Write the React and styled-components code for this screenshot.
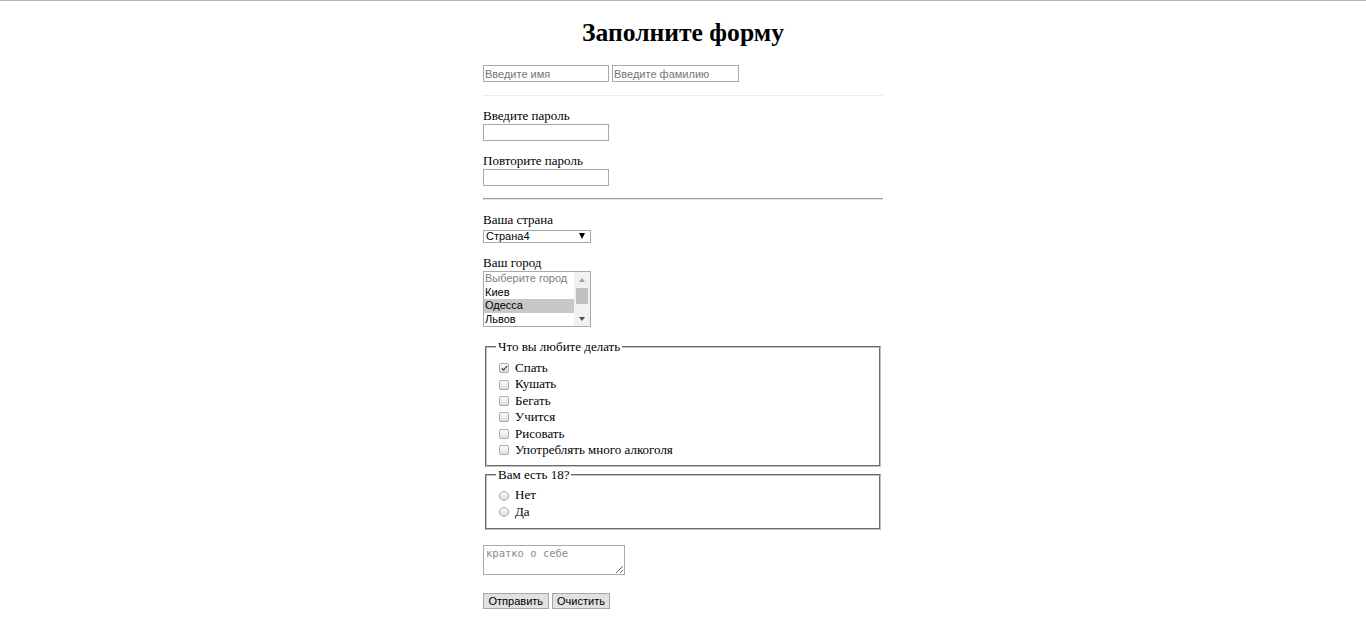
import React from "react";
import styled, { createGlobalStyle } from "styled-components";

const GlobalStyle = createGlobalStyle`
  body {
    margin: 0;
    border-top: 1px solid #b4b4b4;
    font-family: "Liberation Serif", "Times New Roman", serif;
    font-size: 13px;
    color: #000;
    background: #fff;
  }
`;

const Form = styled.form`
  width: 400px;
  margin: 0 auto;
  display: flex;
  flex-direction: column;
  align-items: flex-start;
`;

const Title = styled.h1`
  align-self: stretch;
  margin: 17px 0 0;
  font-size: 25.6px;
  line-height: 30px;
  font-weight: bold;
  text-align: center;
`;

const NameRow = styled.div`
  display: flex;
  gap: 3px;
  margin-top: 17px;
`;

const TextInput = styled.input`
  box-sizing: border-box;
  width: ${(p) => p.$width || 126}px;
  height: 17px;
  margin: 0;
  padding: 0 1px;
  border: 1px solid #a9a9a9;
  border-radius: 0;
  font-family: "Liberation Sans", Arial, sans-serif;
  font-size: 11px;
  outline: none;
  &::placeholder {
    color: #757575;
  }
`;

const Divider = styled.hr`
  align-self: stretch;
  height: 0;
  margin: ${(p) => p.$top}px 0 0;
  border: none;
  border-top: 1px solid ${(p) => (p.$light ? "#ececec" : "#9c9c9c")};
  border-bottom: 1px solid ${(p) => (p.$light ? "transparent" : "#e2e2e2")};
`;

const FieldLabel = styled.label`
  display: block;
  margin-top: ${(p) => p.$top || 12}px;
  line-height: 16px;
`;

const SelectWrap = styled.div`
  position: relative;
  width: 108px;
  height: 13px;
  margin-top: 2px;
`;

const Select = styled.select`
  appearance: none;
  box-sizing: border-box;
  display: block;
  width: 100%;
  height: 100%;
  margin: 0;
  padding: 0 0 0 2px;
  border: 1px solid #a9a9a9;
  border-radius: 0;
  background: #fff;
  font-family: "Liberation Sans", Arial, sans-serif;
  font-size: 11px;
  line-height: 11px;
  color: #000;
  outline: none;
`;

const SelectArrow = styled.span`
  position: absolute;
  right: 6px;
  top: 3px;
  width: 0;
  height: 0;
  border-left: 3.5px solid transparent;
  border-right: 3.5px solid transparent;
  border-top: 6px solid #000;
  pointer-events: none;
`;

const ListBox = styled.div`
  box-sizing: border-box;
  display: flex;
  width: 108px;
  height: 56px;
  border: 1px solid #a9a9a9;
  background: #fff;
  font-family: "Liberation Sans", Arial, sans-serif;
  font-size: 11px;
`;

const OptionList = styled.div`
  flex: 1;
`;

const ListOption = styled.div`
  height: 13.5px;
  line-height: 13.5px;
  padding-left: 1px;
  white-space: nowrap;
  color: ${(p) => (p.$disabled ? "#808080" : "#000")};
  background: ${(p) => (p.$selected ? "#c8c8c8" : "transparent")};
`;

const ScrollBar = styled.div`
  width: 16px;
  background: #f1f1f1;
  display: flex;
  flex-direction: column;
  align-items: center;
`;

const ScrollButton = styled.div`
  height: 15px;
  display: flex;
  align-items: center;
  justify-content: center;
  &::before {
    content: "";
    width: 0;
    height: 0;
    border-left: 3.5px solid transparent;
    border-right: 3.5px solid transparent;
    ${(p) =>
      p.$down
        ? "border-top: 4px solid #505050;"
        : "border-bottom: 4px solid #a3a3a3;"}
  }
`;

const ScrollThumb = styled.div`
  width: 12px;
  height: 16px;
  margin-top: 1px;
  background: #c1c1c1;
`;

const ScrollTrack = styled.div`
  flex: 1;
`;

const Group = styled.fieldset`
  align-self: stretch;
  margin: ${(p) => p.$top || 0}px 2px 0;
  padding: ${(p) => p.$pad}px 9px ${(p) => p.$bottom}px;
  border: 2px groove #c0c0c0;
  min-inline-size: auto;
`;

const Legend = styled.legend`
  padding: 0 2px;
  line-height: 16px;
`;

const ChoiceRow = styled.label`
  display: flex;
  align-items: center;
  height: 16.4px;
  line-height: 16.4px;
  white-space: nowrap;
`;

const Mark = styled.span`
  box-sizing: border-box;
  display: flex;
  align-items: center;
  justify-content: center;
  width: 10px;
  height: 10px;
  margin: 0 6px 0 3px;
  border: 1px solid #ababab;
  border-radius: ${(p) => (p.$round ? "50%" : "2px")};
  background: linear-gradient(#fbfbfb, #dedede);
`;

const About = styled.textarea`
  box-sizing: border-box;
  width: 142px;
  height: 30px;
  margin: 15px 0 0;
  padding: 1px 2px;
  border: 1px solid #a9a9a9;
  border-radius: 0;
  font-family: "DejaVu Sans Mono", "Liberation Mono", monospace;
  font-size: 10.5px;
  outline: none;
  &::placeholder {
    color: #8c8c8c;
  }
`;

const ButtonRow = styled.div`
  display: flex;
  gap: 3px;
  margin-top: 18px;
`;

const Button = styled.button`
  box-sizing: border-box;
  height: 16px;
  margin: 0;
  padding: 0 4.5px;
  border: 1px solid #a6a6a6;
  border-radius: 0;
  background: #e1e1e1;
  font-family: "Liberation Sans", Arial, sans-serif;
  font-size: 11px;
  line-height: 14px;
  color: #000;
`;

const hobbies = [
  { name: "Спать", checked: true },
  { name: "Кушать" },
  { name: "Бегать" },
  { name: "Учится" },
  { name: "Рисовать" },
  { name: "Употреблять много алкоголя" },
];

const Check = () => (
  <svg width="7" height="6" viewBox="0 0 7 6">
    <path d="M0.8 3.2 L2.7 5 L6.2 0.8" fill="none" stroke="#555" strokeWidth="1.3" />
  </svg>
);

export default function App() {
  return (
    <>
      <GlobalStyle />
      <Form onSubmit={(e) => e.preventDefault()}>
        <Title>Заполните форму</Title>
        <NameRow>
          <TextInput placeholder="Введите имя" />
          <TextInput $width={127} placeholder="Введите фамилию" />
        </NameRow>
        <Divider $light $top={13} />

        <FieldLabel $top={11}>Введите пароль</FieldLabel>
        <TextInput type="password" />
        <FieldLabel>Повторите пароль</FieldLabel>
        <TextInput type="password" />
        <Divider $top={12} />

        <FieldLabel $top={12}>Ваша страна</FieldLabel>
        <SelectWrap>
          <Select defaultValue="4">
            <option value="1">Страна1</option>
            <option value="2">Страна2</option>
            <option value="3">Страна3</option>
            <option value="4">Страна4</option>
          </Select>
          <SelectArrow />
        </SelectWrap>

        <FieldLabel $top={12}>Ваш город</FieldLabel>
        <ListBox>
          <OptionList>
            <ListOption $disabled>Выберите город</ListOption>
            <ListOption>Киев</ListOption>
            <ListOption $selected>Одесса</ListOption>
            <ListOption>Львов</ListOption>
          </OptionList>
          <ScrollBar>
            <ScrollButton />
            <ScrollThumb />
            <ScrollTrack />
            <ScrollButton $down />
          </ScrollBar>
        </ListBox>

        <Group $top={12} $pad={5} $bottom={7}>
          <Legend>Что вы любите делать</Legend>
          {hobbies.map((h) => (
            <ChoiceRow key={h.name}>
              <Mark>{h.checked && <Check />}</Mark>
              {h.name}
            </ChoiceRow>
          ))}
        </Group>
        <Group $pad={4} $bottom={8}>
          <Legend>Вам есть 18?</Legend>
          <ChoiceRow>
            <Mark $round />
            Нет
          </ChoiceRow>
          <ChoiceRow>
            <Mark $round />
            Да
          </ChoiceRow>
        </Group>

        <About placeholder="кратко о себе" />
        <ButtonRow>
          <Button type="submit">Отправить</Button>
          <Button type="reset">Очистить</Button>
        </ButtonRow>
      </Form>
    </>
  );
}
